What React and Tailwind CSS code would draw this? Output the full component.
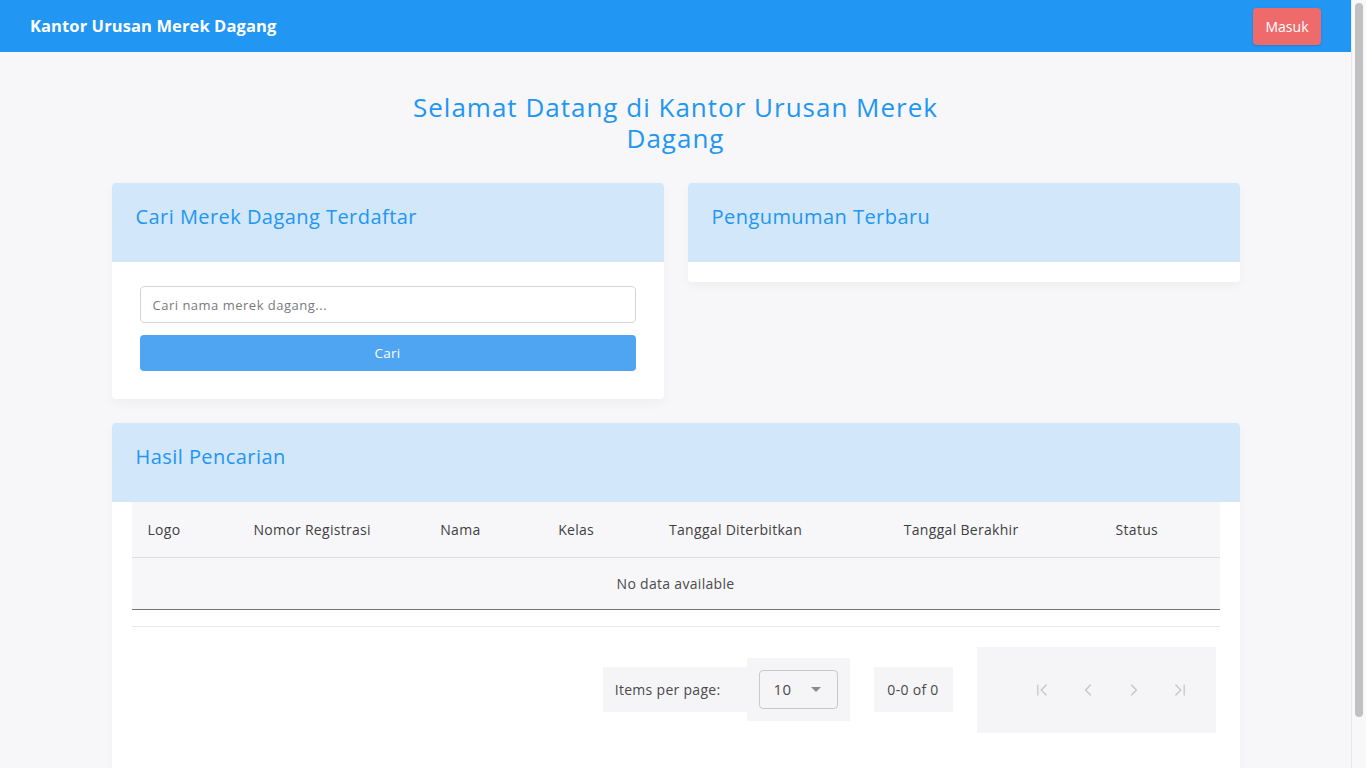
import { ChevronLeft, ChevronRight, ChevronFirst, ChevronLast } from "lucide-react";

const font = { fontFamily: '"Open Sans", "Noto Sans", sans-serif' };

const columns = [
  { label: "Logo", w: "w-[106px]" },
  { label: "Nomor Registrasi", w: "w-[187px]" },
  { label: "Nama", w: "w-[118px]" },
  { label: "Kelas", w: "w-[111px]" },
  { label: "Tanggal Diterbitkan", w: "w-[235px]" },
  { label: "Tanggal Berakhir", w: "w-[212px]" },
  { label: "Status", w: "w-[120px]" },
];

const CardHeader = ({ children }) => (
  <div className="h-[79px] bg-[#d2e7fa] px-6 pt-[20px]">
    <h2 className="text-[20px] leading-[28px] text-[#2196f3] font-medium tracking-[0.45px]">{children}</h2>
  </div>
);

export default function App() {
  return (
    <div className="flex h-screen overflow-hidden bg-[#f7f7f9]" style={font}>
      <div className="flex-1 min-w-0">
        {/* navbar */}
        <header className="h-[52px] bg-[#2196f3] flex items-center justify-between px-[30px]">
          <span className="text-white font-bold text-[16.5px] tracking-[0.1px]">Kantor Urusan Merek Dagang</span>
          <button className="h-[37px] w-[68px] rounded bg-[#ef6b6b] text-white text-[14px] shadow-sm">
            Masuk
          </button>
        </header>

        <main className="w-[1128px] mx-auto pt-[40px] pb-[30px]">
          <h1 className="max-w-[580px] mx-auto text-center text-[26px] leading-[31px] text-[#2196f3] font-medium tracking-[1px]">
            Selamat Datang di Kantor Urusan Merek Dagang
          </h1>

          <div className="mt-[29px] grid grid-cols-2 gap-6 items-start">
            <section className="bg-white rounded overflow-hidden shadow-[0_4px_12px_rgba(0,0,0,0.04)]">
              <CardHeader>Cari Merek Dagang Terdaftar</CardHeader>
              <div className="px-7 pt-6 pb-7 flex flex-col gap-3">
                <input
                  placeholder="Cari nama merek dagang..."
                  className="h-[37px] w-full border border-[#d6d6d8] rounded px-3 text-[13px] tracking-[0.5px] text-[#333] placeholder:text-[#7a7a7a] outline-none"
                />
                <button className="h-[36px] w-full rounded bg-[#4fa5f1] text-white text-[13.5px] tracking-[0.3px]">Cari</button>
              </div>
            </section>

            <section className="bg-white rounded overflow-hidden shadow-[0_4px_12px_rgba(0,0,0,0.04)]">
              <CardHeader>Pengumuman Terbaru</CardHeader>
              <div className="h-5" />
            </section>
          </div>

          <section className="mt-6 bg-white rounded overflow-hidden shadow-[0_4px_12px_rgba(0,0,0,0.04)]">
            <CardHeader>Hasil Pencarian</CardHeader>
            <div className="px-5 pb-[60px]">
              <table className="w-full border-collapse text-[14px] tracking-[0.3px] text-[#3f3f3f]">
                <thead>
                  <tr className="h-[55px] bg-[#f7f7f9] border-b border-[#dcdcdc]">
                    {columns.map((c) => (
                      <th key={c.label} className={`${c.w} text-left font-medium px-4`}>
                        {c.label}
                      </th>
                    ))}
                  </tr>
                </thead>
                <tbody>
                  <tr className="h-[52px] bg-[#f7f7f9] border-b border-[#757575]">
                    <td colSpan={7} className="text-center text-[#4a4a4a]">No data available</td>
                  </tr>
                </tbody>
              </table>
              <div className="mt-4 border-t border-[#e6e6e6]" />
              <div className="mt-5 pr-1 flex items-center justify-end text-[14px] tracking-[0.3px] text-[#4a4a4a]">
                <div className="h-[45px] pl-3 pr-[26px] flex items-center bg-[#f5f5f7]">Items per page:</div>
                <div className="h-[63px] w-[103px] px-3 flex items-center bg-[#f5f5f7]">
                  <div className="h-[39px] w-[79px] border border-[#c9c9cc] rounded flex items-center justify-between pl-[14px] pr-[16px] text-[15px]">
                    <span>10</span>
                    <span className="w-0 h-0 border-x-[5px] border-x-transparent border-t-[5px] border-t-[#8a8a8a]" />
                  </div>
                </div>
                <div className="ml-6 h-[45px] w-[79px] flex items-center justify-center bg-[#f5f5f7]">0-0 of 0</div>
                <div className="ml-6 h-[86px] w-[239px] bg-[#f5f5f7] flex items-center justify-end gap-[26px] pr-[26px] text-[#c4c4c4]">
                  <ChevronFirst size={20} strokeWidth={1.5} />
                  <ChevronLeft size={20} strokeWidth={1.5} />
                  <ChevronRight size={20} strokeWidth={1.5} />
                  <ChevronLast size={20} strokeWidth={1.5} />
                </div>
              </div>
            </div>
          </section>
        </main>
      </div>

      {/* scrollbar */}
      <div className="w-[15px] shrink-0 border-l border-[#e8e8ea] bg-[#f8f8fa] pt-[3px] pl-[3px]">
        <div className="h-[714px] w-[8px] rounded-full bg-[#c1c1c1]" />
      </div>
    </div>
  );
}
